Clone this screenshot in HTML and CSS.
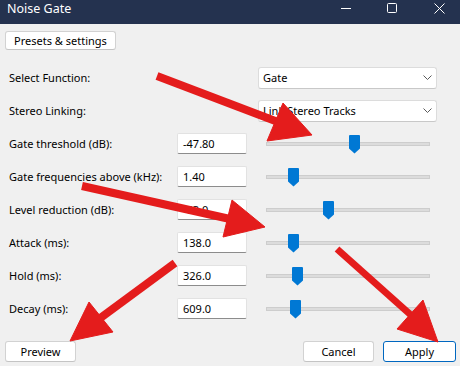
FILE: index.html
```html
<!DOCTYPE html>
<html>
<head>
<meta charset="utf-8">
<link rel="stylesheet" href="styles.css">
</head>
<body>
<div class="window">
  <div class="titlebar">
    <span class="title">Noise Gate</span>
    <div class="winctl">
      <svg class="ic-min" width="11" height="2" viewBox="0 0 11 2"><rect x="0" y="0" width="10" height="1" fill="#fff"/></svg>
      <svg class="ic-max" width="11" height="11" viewBox="0 0 11 11"><rect x="0.5" y="0.5" width="9" height="9" rx="1" fill="none" stroke="#fff" stroke-width="1"/></svg>
      <svg class="ic-close" width="11" height="11" viewBox="0 0 11 11"><path d="M0.5 0.5 L10.5 10.5 M10.5 0.5 L0.5 10.5" stroke="#fff" stroke-width="1" fill="none"/></svg>
    </div>
  </div>
  <div class="content">
    <div class="toolbar"><button class="btn presets">Presets &amp; settings</button></div>
    <div class="form">
      <div class="label">Select Function:</div>
      <div class="cell"></div>
      <div class="select"><span>Gate</span><svg class="chev" width="9" height="5" viewBox="0 0 9 5"><path d="M0.5 0.5 L4.5 4.5 L8.5 0.5" fill="none" stroke="#5a5a5a" stroke-width="1"/></svg></div>

      <div class="label">Stereo Linking:</div>
      <div class="cell"></div>
      <div class="select"><span>Link Stereo Tracks</span><svg class="chev" width="9" height="5" viewBox="0 0 9 5"><path d="M0.5 0.5 L4.5 4.5 L8.5 0.5" fill="none" stroke="#5a5a5a" stroke-width="1"/></svg></div>

      <div class="label">Gate threshold (dB):</div>
      <div class="value">-47.80</div>
      <div class="slider"><div class="track"><div class="thumb" style="left:82px"></div></div></div>

      <div class="label">Gate frequencies above (kHz):</div>
      <div class="value">1.40</div>
      <div class="slider"><div class="track"><div class="thumb" style="left:21px"></div></div></div>

      <div class="label">Level reduction (dB):</div>
      <div class="value">-63.0</div>
      <div class="slider"><div class="track"><div class="thumb" style="left:56px"></div></div></div>

      <div class="label">Attack (ms):</div>
      <div class="value">138.0</div>
      <div class="slider"><div class="track"><div class="thumb" style="left:21px"></div></div></div>

      <div class="label">Hold (ms):</div>
      <div class="value">326.0</div>
      <div class="slider"><div class="track"><div class="thumb" style="left:25px"></div></div></div>

      <div class="label">Decay (ms):</div>
      <div class="value">609.0</div>
      <div class="slider"><div class="track"><div class="thumb" style="left:23px"></div></div></div>
    </div>
    <div class="footer">
      <button class="btn wide">Preview</button>
      <div class="spacer"></div>
      <button class="btn wide">Cancel</button>
      <button class="btn wide primary">Apply</button>
    </div>
  </div>
  <svg class="arrows" width="460" height="366" viewBox="0 0 460 366">
    <g fill="#e41c1c" stroke="#e41c1c">
      <line x1="157" y1="76" x2="278" y2="122" stroke-width="8"/>
      <polygon points="283,103 267,141 312,135" stroke-width="1"/>
      <line x1="82" y1="186" x2="230" y2="219" stroke-width="8"/>
      <polygon points="232,200 223,237 265,227" stroke-width="1"/>
      <line x1="175" y1="263" x2="99" y2="319" stroke-width="8"/>
      <polygon points="89,302 113,332 70,341" stroke-width="1"/>
      <line x1="337" y1="249" x2="412" y2="316" stroke-width="7"/>
      <polygon points="423,300 397,329 438,342" stroke-width="1"/>
    </g>
  </svg>
</div>
</body>
</html>
```

FILE: styles.css
```css
* { box-sizing: border-box; }
html, body { margin: 0; padding: 0; }
body {
  font-family: "Noto Sans", "DejaVu Sans", sans-serif;
  font-size: 11px;
  color: #000;
  background: #f0f0f0;
}
.window {
  position: relative;
  width: 460px;
  height: 366px;
  background: #f0f0f0;
  overflow: hidden;
}
.titlebar {
  height: 24px;
  background: #24324f;
  color: #fff;
  display: flex;
  align-items: flex-start;
}
.title {
  font-size: 12.5px;
  padding-left: 7px;
  line-height: 17px;
}
.winctl {
  margin-left: auto;
  display: flex;
  align-items: flex-start;
}
.ic-min { margin-top: 8px; margin-right: 35px; }
.ic-max { margin-top: 3px; margin-right: 36px; }
.ic-close { margin-top: 3px; margin-right: 15px; }

.content { display: flex; flex-direction: column; }
.toolbar { padding: 7px 0 0 5px; display: flex; }
.btn {
  font-family: inherit;
  font-size: 11px;
  color: #000;
  background: #fff;
  border: 1px solid #d2d2d2;
  border-bottom-color: #c4c4c4;
  border-radius: 3px;
  padding: 0;
  margin: 0;
  height: 19px;
  line-height: 16px;
}
.presets { width: 111px; }

.form {
  margin-top: 11px;
  padding-left: 9px;
  display: grid;
  grid-template-columns: 168px 81px 179px;
  grid-auto-rows: 33px;
  align-items: center;
}
.label { line-height: 16px; }
.select {
  height: 22px;
  background: #fff;
  border: 1px solid #dcdcdc;
  border-bottom-color: #c8c8c8;
  border-radius: 3px;
  display: flex;
  align-items: center;
  padding-left: 4px;
  padding-right: 4px;
}
.select span { flex: 1; }
.value {
  width: 70px;
  height: 21px;
  background: #fff;
  border: 1px solid #e2e2e2;
  border-bottom: 1px solid #8c8c8c;
  border-radius: 2px;
  padding-left: 5px;
  line-height: 19px;
}
.slider { padding: 0 7px 0 8px; }
.track {
  position: relative;
  height: 4px;
  background: #dcdcdc;
  border: 1px solid #cdcdcd;
}
.thumb {
  position: absolute;
  top: -8px;
  width: 11px;
  height: 19px;
  background: #0078d4;
  clip-path: polygon(1px 0, 10px 0, 11px 1px, 11px 14px, 5.5px 19px, 0 14px, 0 1px);
}
.footer {
  margin-top: 16px;
  padding: 0 4px 0 5px;
  display: flex;
}
.spacer { flex: 1; }
.wide { width: 71px; height: 21px; }
.footer .btn + .btn { margin-left: 9px; }
.primary {
  width: 73px;
  border: 1px solid #0067c0;
}
.arrows {
  position: absolute;
  left: 0;
  top: 0;
  pointer-events: none;
}
```
